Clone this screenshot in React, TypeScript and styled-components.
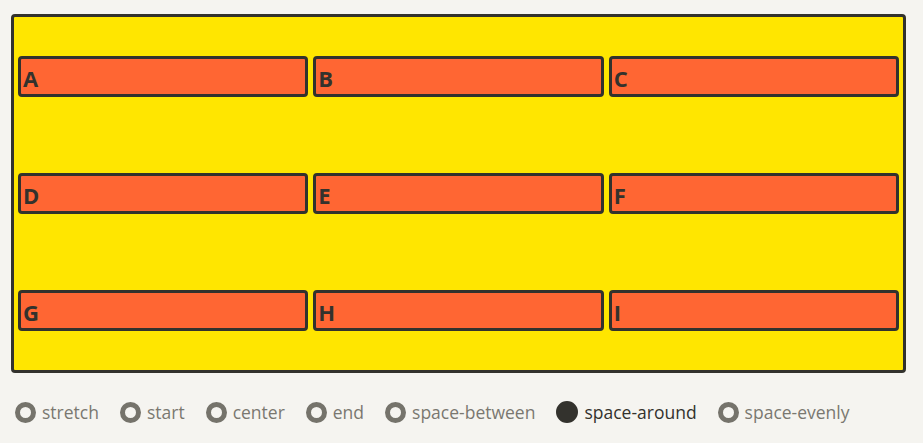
import React, { useState } from 'react';
import styled, { createGlobalStyle } from 'styled-components';

const GlobalStyle = createGlobalStyle`
  body {
    margin: 0;
    background: #f5f4f0;
    font-family: 'Open Sans', 'Noto Sans', sans-serif;
  }
`;

const Page = styled.div`
  padding: 14px 17px 0 11px;
`;

const Grid = styled.div<{ align: string }>`
  box-sizing: border-box;
  height: 359px;
  display: grid;
  grid-template-columns: repeat(3, 1fr);
  gap: 5px;
  align-content: ${(p) => p.align};
  padding: 4px;
  background: #ffe600;
  border: 3px solid #33322d;
  border-radius: 4px;
`;

const Cell = styled.div`
  box-sizing: border-box;
  height: 41px;
  padding: 4px 2px 0;
  background: #ff6633;
  border: 3px solid #33322d;
  border-radius: 4px;
  color: #33322d;
  font-size: 22px;
  font-weight: 700;
  line-height: 30px;
`;

const Options = styled.div`
  display: flex;
  align-items: center;
  gap: 21px;
  padding: 27px 0 0 4px;
`;

const Option = styled.label<{ active: boolean }>`
  display: flex;
  align-items: center;
  gap: 6px;
  font-size: 17.5px;
  color: ${(p) => (p.active ? '#33322d' : '#7a7870')};
  cursor: pointer;
`;

const Dot = styled.span<{ active: boolean }>`
  box-sizing: border-box;
  flex-shrink: 0;
  width: 21px;
  height: 21px;
  border-radius: 50%;
  border: ${(p) => (p.active ? '11px solid #33322d' : '5.5px solid #75736b')};
  background: #f5f4f0;
`;

const LETTERS = ['A', 'B', 'C', 'D', 'E', 'F', 'G', 'H', 'I'];
const MODES = ['stretch', 'start', 'center', 'end', 'space-between', 'space-around', 'space-evenly'];

export default function App() {
  const [mode, setMode] = useState('space-around');

  return (
    <Page>
      <GlobalStyle />
      <Grid align={mode}>
        {LETTERS.map((l) => (
          <Cell key={l}>{l}</Cell>
        ))}
      </Grid>
      <Options>
        {MODES.map((m) => (
          <Option key={m} active={m === mode} onClick={() => setMode(m)}>
            <Dot active={m === mode} />
            {m}
          </Option>
        ))}
      </Options>
    </Page>
  );
}
